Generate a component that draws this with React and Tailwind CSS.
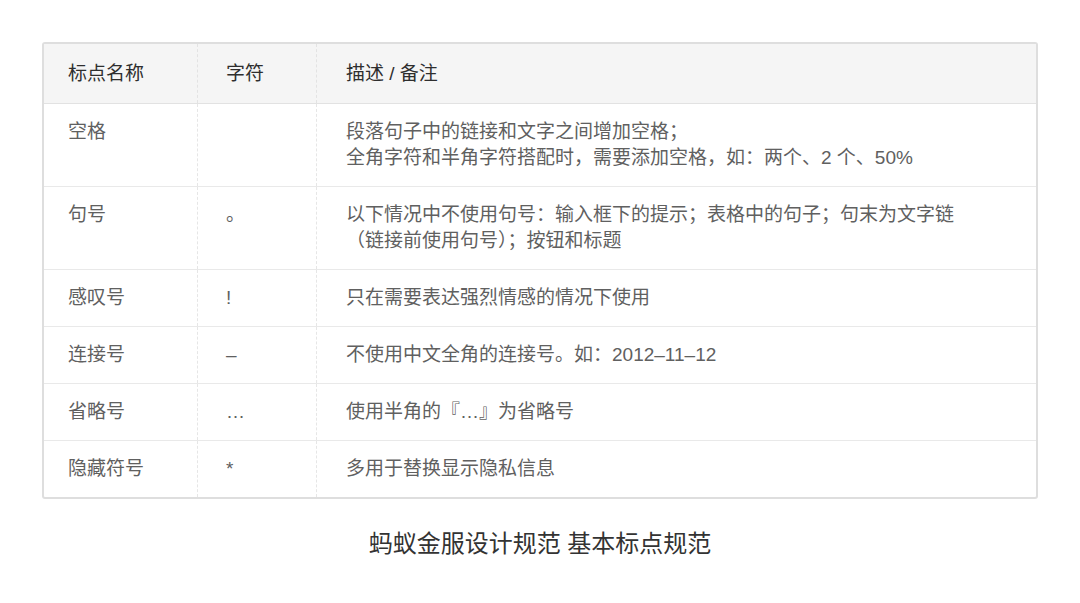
const rows = [
  {
    name: "空格",
    char: "",
    desc: ["段落句子中的链接和文字之间增加空格；", "全角字符和半角字符搭配时，需要添加空格，如：两个、2 个、50%"],
  },
  {
    name: "句号",
    char: "。",
    desc: ["以下情况中不使用句号：输入框下的提示；表格中的句子；句末为文字链", "（链接前使用句号）；按钮和标题"],
  },
  { name: "感叹号", char: "!", desc: ["只在需要表达强烈情感的情况下使用"] },
  { name: "连接号", char: "–", desc: ["不使用中文全角的连接号。如：2012–11–12"] },
  { name: "省略号", char: "…", desc: ["使用半角的『…』为省略号"] },
  { name: "隐藏符号", char: "*", desc: ["多用于替换显示隐私信息"] },
];

function Row({ row, last }) {
  return (
    <div
      className={`grid grid-cols-[154px_119px_1fr] text-[19px] leading-[26px] text-[#606060] ${
        last ? "" : "border-b border-[#e9e9e9]"
      }`}
    >
      <div className="pl-[24px] py-[15px] border-r border-dashed border-[#e6e6e6]">{row.name}</div>
      <div className="pl-[28px] py-[15px] border-r border-dashed border-[#e6e6e6]">{row.char}</div>
      <div className="pl-[29px] py-[15px]">
        {row.desc.map((line, i) => (
          <div key={i}>{line}</div>
        ))}
      </div>
    </div>
  );
}

export default function App() {
  return (
    <div className="w-[1080px] h-[603px] bg-white pt-[42px] px-[42px] font-['Liberation_Sans','Noto_Sans_CJK_SC',sans-serif]">
      <div className="border-2 border-[#dedede] rounded-[3px] overflow-hidden">
        {/* header */}
        <div className="grid grid-cols-[154px_119px_1fr] bg-[#f5f5f5] border-b border-[#e2e2e2] text-[19px] leading-[27px] text-[#2e2e2e]">
          <div className="pl-[24px] py-[16px] border-r border-dashed border-[#e3e3e3]">标点名称</div>
          <div className="pl-[28px] py-[16px] border-r border-dashed border-[#e3e3e3]">字符</div>
          <div className="pl-[29px] py-[16px]">描述 / 备注</div>
        </div>
        {rows.map((row, i) => (
          <Row key={row.name} row={row} last={i === rows.length - 1} />
        ))}
      </div>

      <div className="mt-[28px] text-center text-[24px] leading-[34px] text-[#333]">
        蚂蚁金服设计规范 基本标点规范
      </div>
    </div>
  );
}
